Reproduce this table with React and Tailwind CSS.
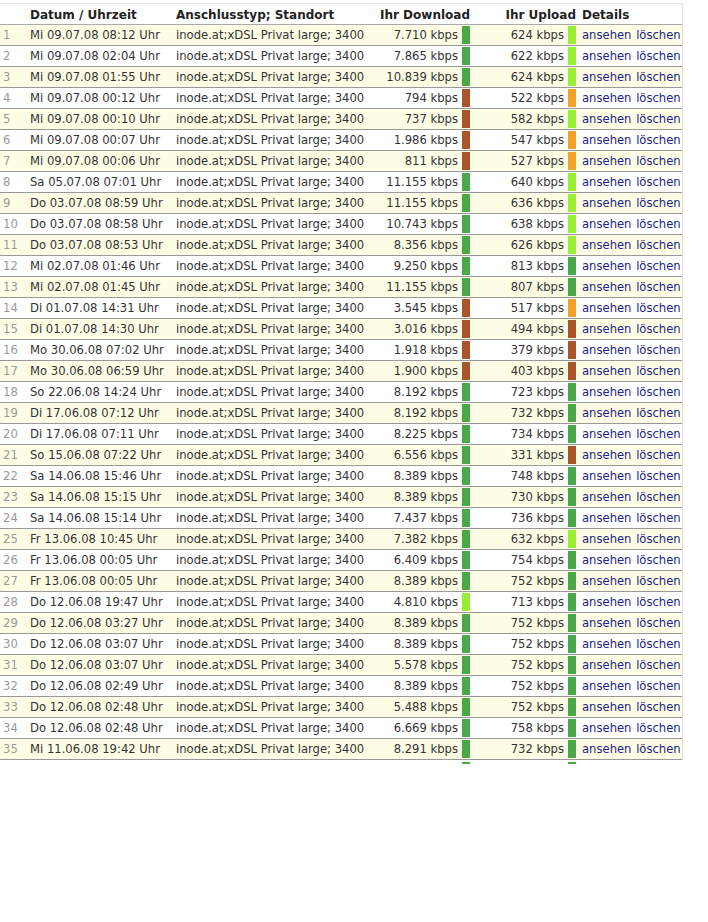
const G = "bg-[#4aa84a]";
const LG = "bg-[#99ee33]";
const O = "bg-[#f2a42a]";
const B = "bg-[#a8552a]";

const rows = [
  ["Mi 09.07.08 08:12 Uhr", "7.710", G, "624", LG],
  ["Mi 09.07.08 02:04 Uhr", "7.865", G, "622", LG],
  ["Mi 09.07.08 01:55 Uhr", "10.839", G, "624", LG],
  ["Mi 09.07.08 00:12 Uhr", "794", B, "522", O],
  ["Mi 09.07.08 00:10 Uhr", "737", B, "582", LG],
  ["Mi 09.07.08 00:07 Uhr", "1.986", B, "547", O],
  ["Mi 09.07.08 00:06 Uhr", "811", B, "527", O],
  ["Sa 05.07.08 07:01 Uhr", "11.155", G, "640", LG],
  ["Do 03.07.08 08:59 Uhr", "11.155", G, "636", LG],
  ["Do 03.07.08 08:58 Uhr", "10.743", G, "638", LG],
  ["Do 03.07.08 08:53 Uhr", "8.356", G, "626", LG],
  ["Mi 02.07.08 01:46 Uhr", "9.250", G, "813", G],
  ["Mi 02.07.08 01:45 Uhr", "11.155", G, "807", G],
  ["Di 01.07.08 14:31 Uhr", "3.545", B, "517", O],
  ["Di 01.07.08 14:30 Uhr", "3.016", B, "494", B],
  ["Mo 30.06.08 07:02 Uhr", "1.918", B, "379", B],
  ["Mo 30.06.08 06:59 Uhr", "1.900", B, "403", B],
  ["So 22.06.08 14:24 Uhr", "8.192", G, "723", G],
  ["Di 17.06.08 07:12 Uhr", "8.192", G, "732", G],
  ["Di 17.06.08 07:11 Uhr", "8.225", G, "734", G],
  ["So 15.06.08 07:22 Uhr", "6.556", G, "331", B],
  ["Sa 14.06.08 15:46 Uhr", "8.389", G, "748", G],
  ["Sa 14.06.08 15:15 Uhr", "8.389", G, "730", G],
  ["Sa 14.06.08 15:14 Uhr", "7.437", G, "736", G],
  ["Fr 13.06.08 10:45 Uhr", "7.382", G, "632", LG],
  ["Fr 13.06.08 00:05 Uhr", "6.409", G, "754", G],
  ["Fr 13.06.08 00:05 Uhr", "8.389", G, "752", G],
  ["Do 12.06.08 19:47 Uhr", "4.810", LG, "713", G],
  ["Do 12.06.08 03:27 Uhr", "8.389", G, "752", G],
  ["Do 12.06.08 03:07 Uhr", "8.389", G, "752", G],
  ["Do 12.06.08 03:07 Uhr", "5.578", G, "752", G],
  ["Do 12.06.08 02:49 Uhr", "8.389", G, "752", G],
  ["Do 12.06.08 02:48 Uhr", "5.488", G, "752", G],
  ["Do 12.06.08 02:48 Uhr", "6.669", G, "758", G],
  ["Mi 11.06.08 19:42 Uhr", "8.291", G, "732", G],
];

const Bar = ({ color }) => (
  <span className={`inline-block w-2 h-[18px] ml-1 ${color}`} />
);

export default function App() {
  return (
    <div
      className="w-[708px] h-[922px] bg-white text-[11.6px] text-[#333]"
      style={{ fontFamily: '"DejaVu Sans", Verdana, sans-serif' }}
    >
      <div className="h-[3px]" />
      <div className="w-[683px] border-t border-r border-[#e4e4e4]">
        {/* header */}
        <div className="flex items-center h-[21px] pt-px border-b border-[#aaa] font-bold text-[12px] text-[#222] bg-white">
          <div className="w-[27px] shrink-0" />
          <div className="w-[146px] shrink-0 pl-[3px]">Datum / Uhrzeit</div>
          <div className="w-[197px] shrink-0 pl-[3px] whitespace-nowrap">Anschlusstyp; Standort</div>
          <div className="w-[100px] shrink-0 text-right whitespace-nowrap">Ihr Download</div>
          <div className="w-[106px] shrink-0 text-right whitespace-nowrap">Ihr Upload</div>
          <div className="pl-[6px]">Details</div>
        </div>

        {rows.map((r, i) => (
          <div
            key={i}
            className={`flex items-center h-[21px] border-b border-[#999] ${
              i % 2 === 0 ? "bg-[#fefee6]" : "bg-white"
            }`}
          >
            <div className="w-[27px] shrink-0 pl-[3px] pt-px text-[#999]">{i + 1}</div>
            <div className="w-[146px] shrink-0 pl-[3px] pt-px whitespace-nowrap">{r[0]}</div>
            <div className="w-[197px] shrink-0 pl-[3px] pt-px whitespace-nowrap">
              inode.at;xDSL Privat large; 3400
            </div>
            <div className="w-[100px] shrink-0 flex items-center justify-end whitespace-nowrap">
              <span className="pt-px">{r[1]} kbps</span>
              <Bar color={r[2]} />
            </div>
            <div className="w-[106px] shrink-0 flex items-center justify-end whitespace-nowrap">
              <span className="pt-px">{r[3]} kbps</span>
              <Bar color={r[4]} />
            </div>
            <div className="pl-[6px] pt-px whitespace-nowrap text-[#22228a]">
              ansehen <span className="ml-[1px]">löschen</span>
            </div>
          </div>
        ))}
      </div>

      {/* clipped remainder of the next row */}
      <div className="flex h-[6px] items-start pt-[2px]">
        <div className="w-[462px] shrink-0" />
        <span className={`w-2 h-[2px] ${G}`} />
        <div className="w-[98px] shrink-0" />
        <span className={`w-2 h-[2px] ${G}`} />
      </div>
    </div>
  );
}
